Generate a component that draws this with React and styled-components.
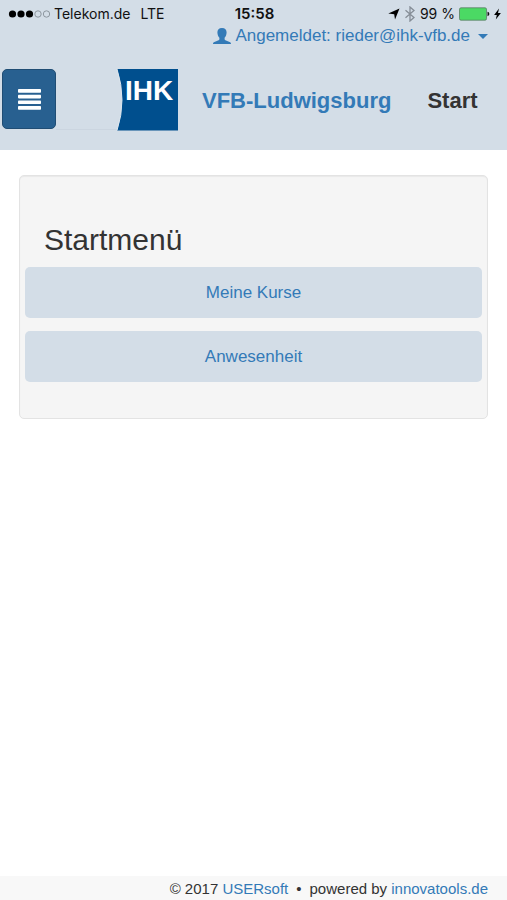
import styled, { createGlobalStyle } from "styled-components";

const GlobalStyle = createGlobalStyle`
  :root {
    --color-bar: #d3dde7;
    --color-link: #337ab7;
    --color-text: #333;
    --color-primary: #286090;
    --color-logo: #004f8e;
    --color-panel: #f5f5f5;
  }

  * {
    box-sizing: border-box;
  }

  body {
    margin: 0;
    background-color: #fff;
    color: var(--color-text);
    font-family: "Liberation Sans", Arial, sans-serif;
    font-size: 17px;
  }

  a {
    color: var(--color-link);
    text-decoration: none;
  }
`;

const Page = styled.div`
  min-height: 100vh;
  display: flex;
  flex-direction: column;
`;

const Header = styled.header`
  background-color: var(--color-bar);
  padding-bottom: 19px;
`;

const StatusBar = styled.div`
  display: grid;
  grid-template-columns: 1fr auto 1fr;
  align-items: center;
  height: 27px;
  padding: 0 6px 0 8px;
  color: #111;
  font-family: Inter, sans-serif;
  font-size: 14px;
`;

const StatusGroup = styled.div`
  display: flex;
  align-items: center;
  justify-content: ${({ $end }) => ($end ? "flex-end" : "flex-start")};
  gap: 4px;
`;

const Network = styled.span`
  margin-left: 6px;
`;

const Clock = styled.time`
  font-size: 15px;
  font-weight: 600;
`;

const UserBar = styled.div`
  display: flex;
  justify-content: flex-end;
  padding: 0 19px;
`;

const UserButton = styled.button`
  display: flex;
  align-items: center;
  gap: 4px;
  height: 18px;
  padding: 0;
  border: none;
  background: none;
  color: var(--color-link);
  font: inherit;
  cursor: pointer;
`;

const Caret = styled.span`
  margin-left: 4px;
  border: 5px solid transparent;
  border-top-color: currentColor;
  border-bottom: none;
`;

const Navbar = styled.nav`
  display: flex;
  align-items: flex-start;
  margin-top: 24px;
  padding: 0 2px;
`;

const MenuButton = styled.button`
  display: flex;
  align-items: center;
  justify-content: center;
  width: 54px;
  height: 60px;
  padding: 0;
  border: 1px solid #204d74;
  border-radius: 5px;
  background-color: var(--color-primary);
  cursor: pointer;
`;

const LogoLink = styled.a`
  display: flex;
`;

const NavTitles = styled.div`
  display: flex;
  flex: 1;
  align-self: center;
  align-items: center;
  gap: 36px;
  padding: 2px 0 0 24px;
  font-size: 22px;
  font-weight: 700;
  line-height: 26px;
`;

const Main = styled.main`
  flex: 1;
  padding: 25px 19px;
`;

const Panel = styled.section`
  padding: 47px 5px 36px;
  border: 1px solid #e3e3e3;
  border-radius: 5px;
  background-color: var(--color-panel);
  box-shadow: inset 0 1px 1px rgba(0, 0, 0, 0.05);
`;

const PanelTitle = styled.h1`
  margin: 0 0 11px;
  padding: 0 19px;
  font-size: 30px;
  font-weight: 500;
  line-height: 33px;
`;

const MenuList = styled.ul`
  display: flex;
  flex-direction: column;
  gap: 13px;
  margin: 0;
  padding: 0;
  list-style: none;
`;

const MenuLink = styled.a`
  display: flex;
  align-items: center;
  justify-content: center;
  height: 51px;
  padding-top: 1px;
  border-radius: 5px;
  background-color: var(--color-bar);
`;

const Footer = styled.footer`
  display: flex;
  justify-content: flex-end;
  gap: 8px;
  padding: 2px 19px 0;
  background-color: #f8f8f8;
  font-size: 15px;
  line-height: 22px;
`;

const menuItems = ["Meine Kurse", "Anwesenheit"];

function SignalIcon() {
  return (
    <svg width="42" height="10" viewBox="0 0 42 10" aria-hidden="true">
      <g fill="#000">
        <circle cx="4.500" cy="5" r="3.600" />
        <circle cx="13" cy="5" r="3.600" />
        <circle cx="21.500" cy="5" r="3.600" />
      </g>
      <g fill="none" stroke="#8d969f">
        <circle cx="30" cy="5" r="3.200" />
        <circle cx="38.500" cy="5" r="3.200" />
      </g>
    </svg>
  );
}

function LocationIcon() {
  return (
    <svg width="12" height="12" viewBox="0 0 12 12" aria-hidden="true">
      <path d="M11.500.5 7 11.500 6.200 6.300.3 5.400z" fill="#000" />
    </svg>
  );
}

function BluetoothIcon() {
  return (
    <svg width="12" height="16" viewBox="0 0 12 16" aria-hidden="true">
      <path
        d="M1.500 4.300 10 11.400 6 15V1l4 3.600-8.500 7.100"
        fill="none"
        stroke="#858d96"
        strokeWidth="1.300"
      />
    </svg>
  );
}

function BatteryIcon() {
  return (
    <svg width="31" height="14" viewBox="0 0 31 14" aria-hidden="true">
      <rect
        x=".5"
        y=".8"
        width="27"
        height="12.400"
        rx="1.500"
        fill="#4bd964"
        stroke="#55705f"
        strokeWidth=".7"
      />
      <path d="M28.500 4.800c2.400.4 2.400 4 0 4.400z" fill="#111" />
    </svg>
  );
}

function BoltIcon() {
  return (
    <svg width="7" height="12" viewBox="0 0 7 12" aria-hidden="true">
      <path d="M5 .5.1 6.900h2.700L1.800 11.500 6.900 5H4z" fill="#000" />
    </svg>
  );
}

function UserIcon() {
  return (
    <svg width="18" height="17" viewBox="0 0 18 17" aria-hidden="true">
      <path
        d="M9 0c3.100 0 4.700 1.900 4.600 4.600-.1 2.200-.8 4-2 5.200v1.400c0 .5.300.8.800 1l4.200 1.700c.9.400 1.400 1 1.400 2.100H0c0-1.100.5-1.700 1.400-2.100l4.200-1.700c.5-.2.800-.5.800-1V9.800c-1.200-1.200-1.900-3-2-5.200C4.300 1.900 5.900 0 9 0z"
        fill="currentColor"
      />
    </svg>
  );
}

function MenuIcon() {
  return (
    <svg width="23" height="21" viewBox="0 0 23 21" fill="#fff" aria-hidden="true">
      <rect width="23" height="3.700" rx=".8" />
      <rect y="5.700" width="23" height="3.700" rx=".8" />
      <rect y="11.400" width="23" height="3.700" rx=".8" />
      <rect y="17.100" width="23" height="3.700" rx=".8" />
    </svg>
  );
}

function Logo() {
  return (
    <svg width="122" height="62" viewBox="0 0 122 62" role="img" aria-label="IHK">
      <path d="M0 60.500h61" stroke="#cbd5e0" />
      <path d="M61 0h61v61.500H61Q71 31 61 0z" fill="var(--color-logo)" />
      <path d="M61 0Q71 31 61 61.500" fill="none" stroke="#dde6ee" />
      <text
        x="69"
        y="31"
        fill="#fff"
        fontFamily="Liberation Sans, Arial, sans-serif"
        fontSize="28"
        fontWeight="700"
      >
        IHK
      </text>
    </svg>
  );
}

function App() {
  return (
    <>
      <GlobalStyle />
      <Page>
        <Header>
          <StatusBar>
            <StatusGroup>
              <SignalIcon />
              <span>Telekom.de</span>
              <Network>LTE</Network>
            </StatusGroup>
            <Clock>15:58</Clock>
            <StatusGroup $end>
              <LocationIcon />
              <BluetoothIcon />
              <span>99 %</span>
              <BatteryIcon />
              <BoltIcon />
            </StatusGroup>
          </StatusBar>

          <UserBar>
            <UserButton type="button" aria-haspopup="menu">
              <UserIcon />
              <span>Angemeldet: rieder@ihk-vfb.de</span>
              <Caret />
            </UserButton>
          </UserBar>

          <Navbar>
            <MenuButton type="button" aria-label="Menü">
              <MenuIcon />
            </MenuButton>
            <LogoLink href="#">
              <Logo />
            </LogoLink>
            <NavTitles>
              <a href="#">VFB-Ludwigsburg</a>
              <span>Start</span>
            </NavTitles>
          </Navbar>
        </Header>

        <Main>
          <Panel>
            <PanelTitle>Startmenü</PanelTitle>
            <MenuList>
              {menuItems.map((item) => (
                <li key={item}>
                  <MenuLink href="#">{item}</MenuLink>
                </li>
              ))}
            </MenuList>
          </Panel>
        </Main>

        <Footer>
          <span>
            © 2017 <a href="#">USERsoft</a>
          </span>
          <span>•</span>
          <span>
            powered by <a href="#">innovatools.de</a>
          </span>
        </Footer>
      </Page>
    </>
  );
}

export default App;
